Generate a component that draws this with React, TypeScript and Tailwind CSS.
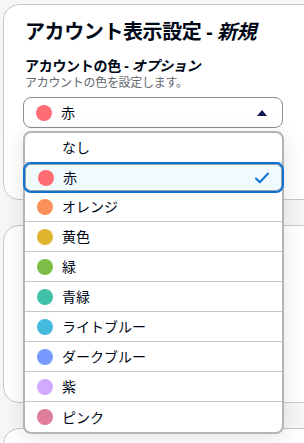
import React from 'react';

type ColorOption = {
  label: string;
  color?: string;
};

const options: ColorOption[] = [
  { label: 'なし' },
  { label: '赤', color: '#ff6b73' },
  { label: 'オレンジ', color: '#fa9159' },
  { label: '黄色', color: '#e0b42e' },
  { label: '緑', color: '#7dbd47' },
  { label: '青緑', color: '#40c1a8' },
  { label: 'ライトブルー', color: '#44badf' },
  { label: 'ダークブルー', color: '#7899ff' },
  { label: '紫', color: '#d1aaff' },
  { label: 'ピンク', color: '#de7c99' },
];

const selected = '赤';

const Dot = ({ color }: { color?: string }) => (
  <span
    className="w-4 h-4 rounded-full shrink-0"
    style={{ backgroundColor: color ?? 'transparent' }}
  />
);

const Option = ({ option, last }: { option: ColorOption; last: boolean }) => {
  const isSelected = option.label === selected;
  if (isSelected) {
    return (
      <div className="relative z-10 -mx-[2px] -my-px flex items-center h-[31px] pl-[13px] pr-[12px] gap-[9px] rounded-[8px] border-2 border-[#0972d3] bg-[#f0fbff] shadow-[inset_0_0_0_1px_#9ba0a8]">
        <Dot color={option.color} />
        <span className="flex-1 text-[14px] text-[#000716]">{option.label}</span>
        <svg width="16" height="16" viewBox="0 0 16 16">
          <path d="M2 8.5l3.8 3.8L14 3.5" fill="none" stroke="#0972d3" strokeWidth="2" strokeLinecap="round" strokeLinejoin="round" />
        </svg>
      </div>
    );
  }
  return (
    <div
      className={`flex items-center h-[30px] pl-[12px] gap-[9px] ${last ? '' : 'border-b border-[#c6c6cd]'}`}
    >
      <Dot color={option.color} />
      <span className="text-[14px] text-[#000716]">{option.label}</span>
    </div>
  );
};

export default function App() {
  return (
    <div
      className="relative w-[304px] h-[443px] overflow-hidden bg-[#f6f6f7] pt-[4px] pl-[3px]"
      style={{ fontFamily: '"Noto Sans", "Noto Sans CJK JP", sans-serif' }}
    >
      <div className="flex flex-col gap-[25px] w-[330px]">
        {/* main card */}
        <div className="h-[196px] rounded-[16px] border border-[#c6c6cd] bg-white pt-[12px] pl-[21px]">
          <h1 className="text-[20px] font-bold leading-[30px] text-[#000716] tracking-[-0.4px]">
            アカウント表示設定 - <i>新規</i>
          </h1>
          <div className="mt-[10px] text-[14px] font-bold leading-[18px] text-[#000716] tracking-[-0.3px]">
            アカウントの色 - <i>オプション</i>
          </div>
          <div className="text-[12px] leading-[16px] text-[#656871] tracking-[-0.3px]">
            アカウントの色を設定します。
          </div>
          <button className="mt-[6px] flex items-center w-[260px] h-[31px] -ml-[2px] pl-[12px] pr-[14px] gap-[9px] rounded-[8px] border border-[#8c8c94] bg-white">
            <Dot color="#ff6b73" />
            <span className="flex-1 text-left text-[14px] text-[#000716]">赤</span>
            <svg width="12" height="8" viewBox="0 0 12 8">
              <path d="M6 1L11 7H1z" fill="#0f1b4c" />
            </svg>
          </button>
        </div>
        <div className="h-[178px] rounded-[16px] border border-[#c6c6cd] bg-white" />
        <div className="h-[60px] rounded-[16px] border border-[#c6c6cd] bg-white" />
      </div>

      {/* dropdown */}
      <div className="absolute left-[23px] top-[131px] w-[261px] rounded-[8px] border-2 border-[#b4b4bb] bg-white shadow-[0_4px_20px_1px_rgba(0,7,22,0.10)]">
        {options.map((o, i) => (
          <Option key={o.label} option={o} last={i === options.length - 1} />
        ))}
      </div>
    </div>
  );
}
